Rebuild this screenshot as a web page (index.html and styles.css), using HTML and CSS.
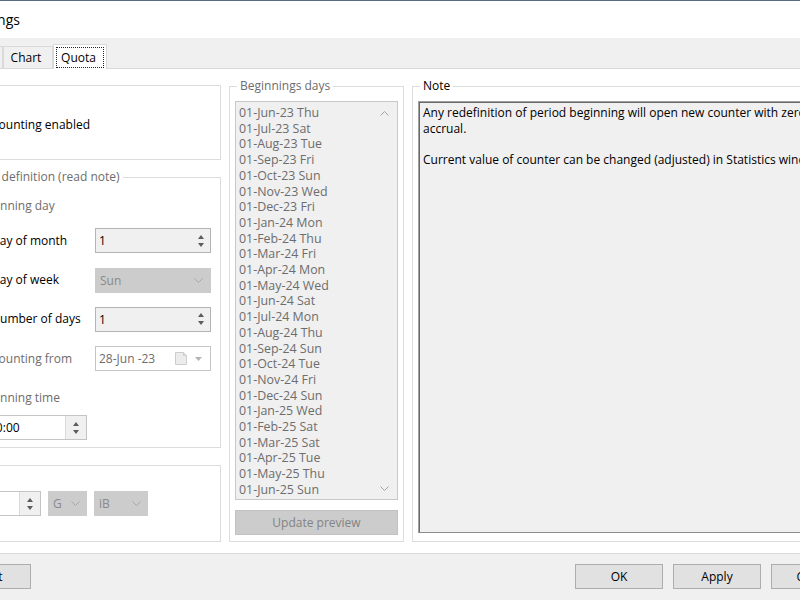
FILE: index.html
```html
<!DOCTYPE html>
<html lang="en">
<head>
    <meta charset="UTF-8">
    <meta name="viewport" content="width=device-width, initial-scale=1.0">
    <title>Settings</title>
    <link rel="stylesheet" href="styles.css">
</head>
<body>
    <div class="window">
        <div class="titlebar"><span class="title">Settings</span></div>

        <div class="tabstrip">
            <div class="tab tab-general">General</div>
            <div class="tab tab-chart">Chart</div>
            <div class="tab tab-active"><span class="focus">Quota</span></div>
        </div>

        <div class="panel">
            <div class="col-left">
                <fieldset class="group grp-enable">
                    <label class="opt"><span class="checkbox"></span>Counting enabled</label>
                </fieldset>

                <fieldset class="group grp-period">
                    <legend>Period definition (read note)</legend>
                    <div class="sub">Beginning day</div>
                    <div class="row">
                        <label class="opt"><span class="radio"></span>Day of month</label>
                        <div class="spin ro">
                            <span class="val">1</span>
                            <span class="arrows"><i class="up"></i><i class="down"></i></span>
                        </div>
                    </div>
                    <div class="row">
                        <label class="opt"><span class="radio"></span>Day of week</label>
                        <div class="combo off">
                            <span class="val">Sun</span>
                            <svg class="chev" width="9" height="5" viewBox="0 0 9 5"><polyline points="0.5,0.5 4.5,4.5 8.5,0.5" fill="none" stroke="#a8a8a8"/></svg>
                        </div>
                    </div>
                    <div class="row">
                        <label class="opt"><span class="radio"></span>Number of days</label>
                        <div class="spin ro">
                            <span class="val">1</span>
                            <span class="arrows"><i class="up"></i><i class="down"></i></span>
                        </div>
                    </div>
                    <div class="row dim">
                        <label class="opt"><span class="checkbox"></span>Counting from</label>
                        <div class="date">
                            <span class="val">28-Jun -23</span>
                            <svg class="cal" width="12" height="13" viewBox="0 0 12 13"><path d="M0.5 0.5H8.5L11.5 3.5V12.5H0.5Z" fill="#ececec" stroke="#cdcdcd"/><path d="M8.5 0.5V3.5H11.5" fill="none" stroke="#cdcdcd"/></svg>
                            <svg class="drop" width="7" height="4" viewBox="0 0 7 4"><polygon points="0,0 7,0 3.5,4" fill="#b4b4b4"/></svg>
                        </div>
                    </div>
                    <div class="sub sub-time">Beginning time</div>
                    <div class="spin time">
                        <span class="val">00:00</span>
                        <span class="arrows framed"><i class="up"></i><i class="down"></i></span>
                    </div>
                </fieldset>

                <fieldset class="group grp-limit">
                    <div class="spin limit">
                        <span class="val"></span>
                        <span class="arrows framed"><i class="up"></i><i class="down"></i></span>
                    </div>
                    <div class="combo off unit-g">
                        <span class="val">G</span>
                        <svg class="chev" width="9" height="5" viewBox="0 0 9 5"><polyline points="0.5,0.5 4.5,4.5 8.5,0.5" fill="none" stroke="#a8a8a8"/></svg>
                    </div>
                    <div class="combo off unit-b">
                        <span class="val">iB</span>
                        <svg class="chev" width="9" height="5" viewBox="0 0 9 5"><polyline points="0.5,0.5 4.5,4.5 8.5,0.5" fill="none" stroke="#a8a8a8"/></svg>
                    </div>
                </fieldset>
            </div>

            <fieldset class="group grp-days">
                <legend>Beginnings days</legend>
                <div class="list">
                    <div class="items">
                        <div>01-Jun-23 Thu</div>
                        <div>01-Jul-23 Sat</div>
                        <div>01-Aug-23 Tue</div>
                        <div>01-Sep-23 Fri</div>
                        <div>01-Oct-23 Sun</div>
                        <div>01-Nov-23 Wed</div>
                        <div>01-Dec-23 Fri</div>
                        <div>01-Jan-24 Mon</div>
                        <div>01-Feb-24 Thu</div>
                        <div>01-Mar-24 Fri</div>
                        <div>01-Apr-24 Mon</div>
                        <div>01-May-24 Wed</div>
                        <div>01-Jun-24 Sat</div>
                        <div>01-Jul-24 Mon</div>
                        <div>01-Aug-24 Thu</div>
                        <div>01-Sep-24 Sun</div>
                        <div>01-Oct-24 Tue</div>
                        <div>01-Nov-24 Fri</div>
                        <div>01-Dec-24 Sun</div>
                        <div>01-Jan-25 Wed</div>
                        <div>01-Feb-25 Sat</div>
                        <div>01-Mar-25 Sat</div>
                        <div>01-Apr-25 Tue</div>
                        <div>01-May-25 Thu</div>
                        <div>01-Jun-25 Sun</div>
                    </div>
                    <div class="scroll">
                        <svg width="9" height="5" viewBox="0 0 9 5"><polyline points="0.5,4.5 4.5,0.5 8.5,4.5" fill="none" stroke="#a4a4a4"/></svg>
                        <svg width="9" height="5" viewBox="0 0 9 5"><polyline points="0.5,0.5 4.5,4.5 8.5,0.5" fill="none" stroke="#a4a4a4"/></svg>
                    </div>
                </div>
                <div class="btn btn-off">Update preview</div>
            </fieldset>

            <fieldset class="group grp-note">
                <legend>Note</legend>
                <div class="note">
                    <p>Any redefinition of period beginning will open new counter with zero<br>accrual.</p>
                    <p>Current value of counter can be changed (adjusted) in Statistics window.</p>
                </div>
            </fieldset>
        </div>

        <div class="footer">
            <div class="btn">Reset</div>
            <div class="footer-right">
                <div class="btn">OK</div>
                <div class="btn">Apply</div>
                <div class="btn">Cancel</div>
            </div>
        </div>
    </div>
</body>
</html>
```

FILE: styles.css
```css
* {
    box-sizing: border-box;
}

html, body {
    margin: 0;
    height: 100%;
    overflow: hidden;
}

body {
    font-family: 'Open Sans', 'Noto Sans', sans-serif;
    font-size: 12px;
    color: #000;
    background-color: #f0f0f0;
}

/* dialog is cropped on the left, so it starts off screen */
.window {
    width: 940px;
    margin-left: -70px;
    border-top: 1px solid #596b82;
}

.titlebar {
    height: 37px;
    background-color: #fff;
    display: flex;
    align-items: center;
    padding-left: 38px;
}

.title {
    font-size: 14px;
}

/* tabs */
.tabstrip {
    height: 31px;
    background-color: #f0f0f0;
    border-bottom: 1px solid #d9d9d9;
    display: flex;
    align-items: flex-end;
    padding-left: 2px;
}

.tab {
    height: 22px;
    border: 1px solid #d9d9d9;
    border-bottom: none;
    display: flex;
    align-items: center;
    justify-content: center;
}

.tab-general {
    width: 71px;
}

.tab-chart {
    width: 50px;
    padding-right: 4px;
}

.tab-active {
    width: 54px;
    height: 25px;
    margin-bottom: -1px;
    background-color: #fff;
    align-items: flex-start;
    padding-top: 2px;
}

.focus {
    width: 48px;
    height: 21px;
    border: 1px dotted #222;
    display: flex;
    align-items: center;
    justify-content: center;
    padding-right: 3px;
}

/* tab page */
.panel {
    height: 485px;
    background-color: #fff;
    border-bottom: 1px solid #d9d9d9;
    display: flex;
    align-items: flex-start;
    gap: 8px;
    padding: 9px 0 0 13px;
}

.group {
    margin: 0;
    padding: 0;
    min-width: 0;
    border: 1px solid #dcdcdc;
}

legend {
    padding: 0 3px;
    margin-left: 2px;
    line-height: 16px;
    color: #6d6d6d;
}

.col-left {
    width: 278px;
}

.grp-enable {
    margin-top: 7px;
    height: 75px;
    padding: 31px 0 0 29px;
}

.grp-period {
    margin-top: 9px;
    height: 279px;
    padding: 13px 0 0 29px;
}

.grp-period legend {
    margin-left: -14px;
}

.grp-limit {
    margin-top: 17px;
    height: 77px;
    padding: 0 0 0 29px;
    display: flex;
    align-items: center;
    gap: 7px;
}

.opt {
    display: flex;
    align-items: center;
    line-height: 16px;
}

.checkbox, .radio {
    width: 13px;
    height: 13px;
    border: 1px solid #333;
    background-color: #fff;
    margin-right: 5px;
}

.radio {
    border-radius: 50%;
}

.sub {
    line-height: 16px;
    padding-left: 3px;
    color: #6d6d6d;
}

.sub-time {
    margin-top: 19px;
}

.row {
    display: flex;
    align-items: center;
    margin-top: 14.3px;
}

.row:first-of-type {
    margin-top: 13px;
}

.row .opt {
    width: 122px;
}

.dim .opt {
    color: #6d6d6d;
}

/* edit controls */
.spin, .combo, .date {
    height: 25px;
    width: 116px;
    display: flex;
    align-items: center;
    border: 1px solid #c4c4c4;
    background-color: #fff;
}

.val {
    flex: 1;
    padding-left: 3px;
    white-space: nowrap;
}

.spin.ro {
    background-color: #f0f0f0;
    border-color: #b4b4b4;
}

.arrows {
    width: 17px;
    height: 100%;
    display: flex;
    flex-direction: column;
    justify-content: center;
    align-items: center;
    gap: 4px;
    margin-right: 1px;
}

.arrows.framed {
    width: 21px;
    margin-right: 0;
    background-color: #f0f0f0;
    border-left: 1px solid #dadada;
}

.up, .down {
    width: 0;
    height: 0;
    border-left: 3.5px solid transparent;
    border-right: 3.5px solid transparent;
}

.up {
    border-bottom: 4px solid #5c5c5c;
}

.down {
    border-top: 4px solid #5c5c5c;
}

.combo.off {
    background-color: #cccccc;
    border-color: #cccccc;
    color: #8a8a8a;
}

.combo .val {
    padding-left: 4px;
}

.chev {
    margin-right: 7px;
}

.date .val {
    color: #6d6d6d;
}

.cal {
    margin-right: 8px;
}

.drop {
    margin-right: 8px;
}

.spin.time {
    width: 103px;
    margin-top: 9px;
    margin-left: 11px;
}

.spin.time .val {
    padding-left: 4px;
}

.spin.limit {
    width: 68px;
}

.unit-g {
    width: 39px;
}

.unit-b {
    width: 54px;
}

.unit-g .chev, .unit-b .chev {
    margin-right: 6px;
}

/* beginnings list */
.grp-days {
    width: 175px;
    height: 464px;
    padding: 7px 5px 0 5px;
}

.list {
    height: 399px;
    display: flex;
    background-color: #f0f0f0;
    border: 1px solid #c8c8c8;
}

.items {
    flex: 1;
    padding: 3px 0 0 3px;
    font-size: 12.4px;
    line-height: 15.7px;
    color: #6d6d6d;
}

.scroll {
    width: 20px;
    display: flex;
    flex-direction: column;
    justify-content: space-between;
    align-items: center;
    padding: 9px 6px 8px 0;
}

.scroll svg {
    display: block;
}

.btn {
    width: 88px;
    height: 25px;
    display: flex;
    align-items: center;
    justify-content: center;
    background-color: #e1e1e1;
    border: 1px solid #adadad;
}

.btn-off {
    width: auto;
    margin-top: 10px;
    background-color: #cccccc;
    border-color: #c2c2c2;
    color: #838383;
}

/* note */
.grp-note {
    width: 448px;
    height: 464px;
    padding: 7px 5px 0 5px;
}

.grp-note legend {
    color: #000;
}

.note {
    height: 432px;
    background-color: #f0f0f0;
    border: 1px solid #a0a0a0;
    border-right-color: #e3e3e3;
    border-bottom-color: #8c8c8c;
    box-shadow: inset 1px 1px 0 #696969;
    padding: 3px 4px;
    line-height: 15.5px;
    white-space: nowrap;
}

.note p {
    margin: 0 0 15.5px 0;
}

/* bottom buttons */
.footer {
    display: flex;
    padding: 10px 11px 0 13px;
}

.footer-right {
    margin-left: auto;
    display: flex;
    gap: 10px;
}
```
